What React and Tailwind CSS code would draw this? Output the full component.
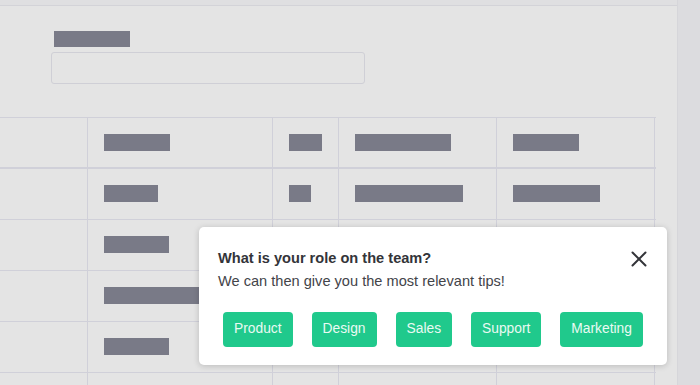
const cols = "grid grid-cols-[88px_185px_66px_158px_158px]";

const rows = [
  [66, 33, 96, 66],
  [54, 22, 108, 87],
  [65, 0, 0, 0],
  [120, 0, 0, 0],
  [65, 0, 0, 0],
  [0, 0, 0, 0],
];

function Bar({ w }) {
  if (!w) return null;
  return <div className="h-[17px] bg-[#797a87]" style={{ width: w }} />;
}

function Row({ widths, header }) {
  return (
    <div className={`${cols} h-[51px] border-[#d0d0d9] ${header ? "border-b-2" : "border-b"}`}>
      <div className="border-r border-[#d0d0d9]" />
      {widths.map((w, i) => (
        <div key={i} className="border-r border-[#d0d0d9] pl-4 pt-4">
          <Bar w={w} />
        </div>
      ))}
    </div>
  );
}

export default function App() {
  const roles = ["Product", "Design", "Sales", "Support", "Marketing"];
  return (
    <div className="relative flex h-[385px] w-[700px] overflow-hidden bg-[#e4e4e4] font-['Liberation_Sans',Arial,sans-serif]">
      {/* page behind the overlay */}
      <div className="flex w-[677px] flex-col">
        <div className="h-[6px] shrink-0 border-b border-[#d3d3d8] bg-[#dfdfe1]" />
        <div className="pl-[51px] pt-[25px]">
          <div className="ml-[3px] h-[16px] w-[76px] bg-[#797a87]" />
          <div className="mt-[5px] h-[32px] w-[314px] rounded-[3px] border border-[#cfcfd6]" />
        </div>
        <div className="mt-[33px] w-[656px] border-t border-[#d0d0d9]">
          <Row widths={rows[0]} header />
          {rows.slice(1).map((r, i) => (
            <Row key={i} widths={r} />
          ))}
        </div>
      </div>
      <div className="w-[23px] shrink-0 border-l border-[#d6d6da] bg-[#dcdcdf]" />

      {/* tip popup */}
      <div className="absolute left-[199px] top-[227px] h-[138px] w-[468px] rounded-[5px] bg-white pl-[19px] pr-[18px] pt-[20px] shadow-[0_1px_6px_rgba(0,0,0,0.18)]">
        <div className="flex items-start justify-between">
          <div>
            <h2 className="text-[14.6px] font-bold leading-[22px] text-[#333439]">What is your role on the team?</h2>
            <p className="mt-[1px] text-[14.6px] leading-[22px] text-[#434449]">We can then give you the most relevant tips!</p>
          </div>
          <button className="mr-[2px] mt-[4px] text-[#333439]">
            <svg width="16" height="16" viewBox="0 0 16 16" fill="none" stroke="currentColor" strokeWidth="2" strokeLinecap="round">
              <path d="M1.5 1.5 L14.5 14.5 M14.5 1.5 L1.5 14.5" />
            </svg>
          </button>
        </div>
        <div className="mt-[20px] flex gap-[19px] pl-[5px]">
          {roles.map((r) => (
            <button key={r} className="h-[35px] rounded-[4px] bg-[#20c98c] px-[11px] text-[13.8px] text-[#eafaf3]">
              {r}
            </button>
          ))}
        </div>
      </div>
    </div>
  );
}
